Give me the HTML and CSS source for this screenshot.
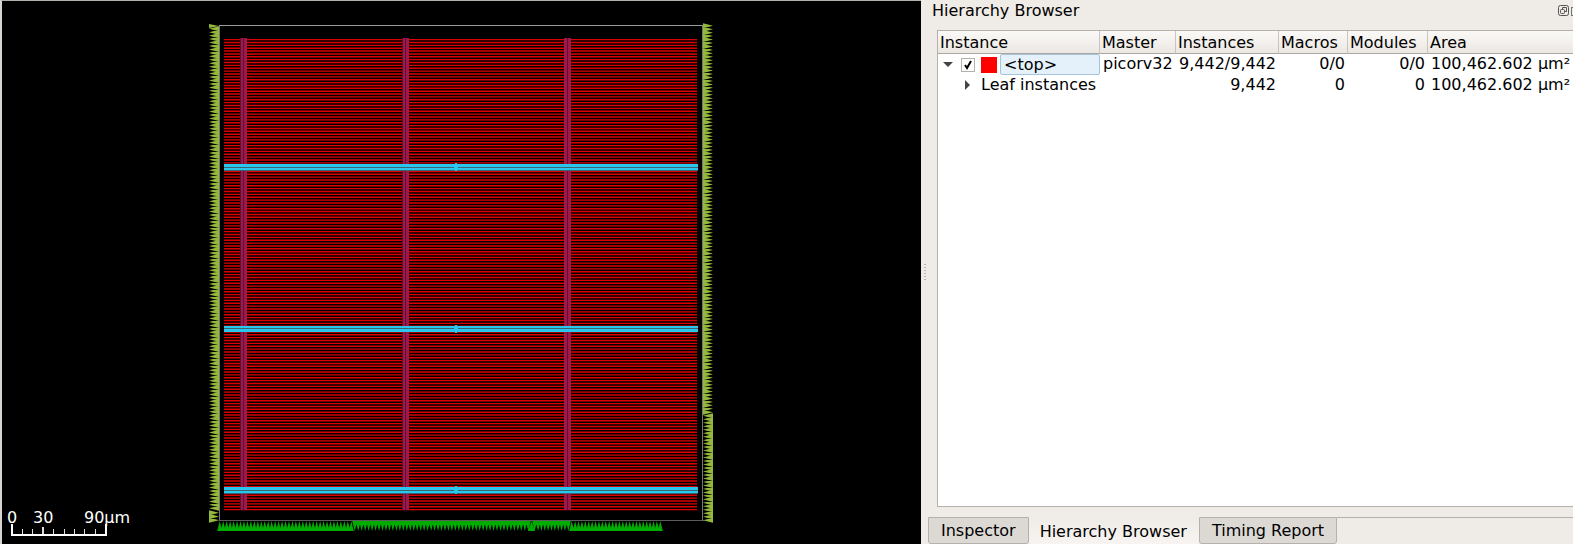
FILE: index.html
```html
<!DOCTYPE html>
<html lang="en">
<head>
<meta charset="utf-8">
<title>Hierarchy Browser</title>
<link rel="stylesheet" href="styles.css">
</head>
<body>
<div class="app">
  <main class="viewer">
    <svg class="layout" viewBox="2 1 919 543" preserveAspectRatio="xMinYMax meet" role="img" aria-label="Chip layout">
      <path id="rows" fill="#dc0000"/>
      <g fill="#a0184a">
        <path d="M241 38h2v472h-2zM244 38h3v472h-3zM403 38h2v472h-2zM406 38h3v472h-3zM564 38h3v472h-3zM568 38h3v472h-3z"/>
        <path fill="#5c1038" d="M240 38h1v472h-1zM243 38h1v472h-1zM402 38h1v472h-1zM405 38h1v472h-1zM567 38h1v472h-1z"/>
      </g>
      <g fill="#28c8ee">
        <path d="M224 164h474v3h-474zM224 168h474v2h-474zM224 326h474v2h-474zM224 329h474v3h-474zM224 487h474v3h-474zM224 491h474v2h-474z"/>
        <path fill="#3c6470" d="M224 167h474v1h-474zM224 170h474v1h-474zM224 328h474v1h-474zM224 490h474v1h-474zM224 493h474v1h-474z"/>
        <path d="M455 163h2v8h-2zM454 165h4v4h-4zM455 325h2v8h-2zM454 327h4v4h-4zM455 486h2v8h-2zM454 488h4v4h-4z"/>
      </g>
      <path fill="#999" d="M219 25h485v1h-485z"/>
      <path fill="#777" d="M219 26h1v495h-1zM702 26h1v495h-1z"/>
      <path fill="#5c5c5c" d="M219 520h485v1h-485z"/>
      <path id="side-pins" fill="#94b83c"/>
      <path id="bottom-pins" fill="#00ac00"/>
      <g fill="#fff">
        <path d="M11 524h2v12h-2zM105 524h2v12h-2zM11 534h96v2h-96z"/>
        <path fill="#ddd" d="M22 529h1v5h-1zM32 529h1v5h-1zM42 527h2v7h-2zM53 529h1v5h-1zM64 529h1v5h-1zM74 529h1v5h-1zM84 529h1v5h-1zM95 529h1v5h-1z"/>
        <text x="7" y="523">0</text>
        <text x="33" y="523">30</text>
        <text x="84" y="523">90µm</text>
      </g>
    </svg>
  </main>
  <div class="splitter" aria-hidden="true"><span class="grip"></span></div>
  <aside class="dock">
    <header class="dock-title">
      <h1>Hierarchy Browser</h1>
      <button class="float" aria-label="Float panel">
        <svg width="12" height="12" viewBox="0 0 12 12" fill="none" stroke="#555"><rect x=".5" y=".5" width="10" height="10" rx="2"/><rect x="2.5" y="4.5" width="4" height="4" rx="1"/><path d="M4.500 4.500v-2h4v4h-2"/></svg>
      </button>
      <button class="close" aria-label="Close panel"></button>
    </header>
    <div class="tree">
      <table>
        <colgroup><col class="c-instance"><col class="c-master"><col class="c-instances"><col class="c-macros"><col class="c-modules"><col></colgroup>
        <thead><tr><th>Instance</th><th>Master</th><th>Instances</th><th>Macros</th><th>Modules</th><th>Area</th></tr></thead>
        <tbody>
          <tr>
            <td class="name"><div class="node">
              <button class="arrow" aria-label="Collapse"><svg width="10" height="6" viewBox="0 0 10 6"><path fill="#444" d="M0 0h10L5 5z"/></svg></button>
              <input type="checkbox" id="top" checked>
              <span class="swatch"></span>
              <label class="current" for="top">&lt;top&gt;</label>
            </div></td>
            <td>picorv32</td><td class="num">9,442/9,442</td><td class="num">0/0</td><td class="num">0/0</td><td>100,462.602 µm²</td>
          </tr>
          <tr>
            <td class="name"><div class="node child">
              <button class="arrow" aria-label="Expand"><svg width="6" height="10" viewBox="0 0 6 10"><path fill="#444" d="M0 0v10l5-5z"/></svg></button>
              <span>Leaf instances</span>
            </div></td>
            <td></td><td class="num">9,442</td><td class="num">0</td><td class="num">0</td><td>100,462.602 µm²</td>
          </tr>
        </tbody>
      </table>
    </div>
    <nav class="tabs">
      <button class="tab">Inspector</button>
      <button class="tab selected">Hierarchy Browser</button>
      <button class="tab">Timing Report</button>
      <span class="rest"></span>
    </nav>
  </aside>
</div>
<script src="layout.js"></script>
</body>
</html>
```
FILE: styles.css
```css
* { box-sizing: border-box; }
body {
  margin: 0;
  background: #efebe7;
  color: #000;
  font: 16px/20px "DejaVu Sans", sans-serif;
}
button { padding: 0; border: 0; background: none; font: inherit; color: inherit; }
.app {
  display: grid;
  grid-template-columns: minmax(0, 921fr) 7px minmax(0, 645fr);
  height: 100vh;
  overflow: hidden;
}
.viewer {
  border-top: 1px solid #b4b0ac;
  border-left: 2px solid #d8d4d0;
  background: #000;
  overflow: hidden;
}
.layout { display: block; width: 100%; height: 100%; }
.splitter { display: flex; align-items: center; justify-content: center; }
.grip {
  width: 2px;
  height: 17px;
  background: repeating-linear-gradient(#bbb7b3 0 1px, transparent 1px 3px);
}
.dock { display: flex; flex-direction: column; min-width: 0; }
.dock-title { display: flex; align-items: center; height: 22px; padding-left: 4px; }
.dock-title h1 { flex: 1; margin: 0; font-size: 16px; font-weight: 400; }
.float, .close { display: flex; }
.close { width: 2px; height: 9px; margin-left: 1px; border: 1px solid #777; border-right: 0; }
.tree {
  flex: 1;
  margin: 8px 0 10px 9px;
  border: 1px solid #b4b0ac;
  border-right: 0;
  background: #fff;
  overflow: hidden;
}
table { width: 100%; table-layout: fixed; border-collapse: separate; border-spacing: 0; }
.c-instance { width: 162px; }
.c-master { width: 76px; }
.c-instances { width: 103px; }
.c-macros { width: 69px; }
.c-modules { width: 80px; }
th {
  height: 23px;
  padding: 2px 2px 0;
  border-right: 1px solid #c8c4c0;
  border-bottom: 1px solid #aaa6a2;
  background: linear-gradient(#fbf9f7, #ebe7e3);
  font-weight: 400;
  text-align: left;
}
th:last-child { border-right: 0; }
td { padding: 0 3px; line-height: 20px; white-space: nowrap; vertical-align: top; }
td.name { padding: 0; }
td.num { text-align: right; }
.node { display: flex; align-items: center; height: 21px; padding-left: 5px; }
.node.child { height: 20px; padding-left: 27px; }
.arrow { display: flex; width: 10px; margin-right: 8px; flex: none; }
input[type="checkbox"] {
  appearance: none;
  width: 14px;
  height: 14px;
  margin: 0 6px 0 0;
  border: 1px solid #b4b0ac;
  background: #fff url("data:image/svg+xml,%3Csvg xmlns='http://www.w3.org/2000/svg' viewBox='0 0 12 12'%3E%3Cpath d='M3 6l2 3 4-7' fill='none' stroke='black' stroke-width='2'/%3E%3C/svg%3E");
}
.swatch { width: 16px; height: 16px; margin-right: 3px; background: #f00; }
.current {
  flex: 1;
  height: 21px;
  padding-left: 3px;
  border: 1px solid #a8c4d8;
  border-radius: 2px;
  background: #e5f1fa;
  line-height: 19px;
}
.child .arrow { width: 8px; }
.tabs { display: flex; height: 27px; }
.tab {
  padding: 0 12px;
  border: 1px solid #b4b0ac;
  border-radius: 0 0 3px 3px;
  background: #dcd8d4;
  line-height: 24px;
  white-space: nowrap;
}
.tab.selected {
  padding: 2px 12px 0 11px;
  border: 0;
  background: linear-gradient(#efebe7, #f7f4f1);
}
.rest { flex: 1; border-top: 1px solid #b4b0ac; }
text { font: 16px "DejaVu Sans", sans-serif; }
```
FILE: layout.js
```js
// Standard-cell power rails
let rails = "";
for (let i = 0; i <= 164; i++) {
  rails += `M224 ${(38.9 + i * 2.866).toFixed(2)}h473v1.4h-473z`;
}
document.getElementById("rows").setAttribute("d", rails);

// Triangular pin markers spread evenly along one edge, overlapping at the base
function pins(from, to, base, tip, vertical) {
  const count = Math.max(1, Math.round((to - from) / 3.45));
  const step = (to - from) / count;
  const point = (along, across) => vertical ? `${across} ${along.toFixed(2)}` : `${along.toFixed(2)} ${across}`;
  let d = "";
  for (let i = 0; i < count; i++) {
    const a = from + i * step;
    d += `M${point(a - 0.8, base)}L${point(a + step / 2, tip)}L${point(a + step + 0.8, base)}z`;
  }
  return d;
}

document.getElementById("side-pins").setAttribute("d",
  "M209 24L219 26L209 28z" +
  pins(27, 510, 219, 209, true) +
  pins(511, 522, 209, 219, true) +
  pins(24, 414, 703, 713, true) +
  pins(414, 522, 713, 703, true));

document.getElementById("bottom-pins").setAttribute("d",
  pins(218, 353, 531, 521, false) +
  pins(353, 530, 521, 531, false) +
  pins(529, 534, 531, 521, false) +
  pins(533, 570, 521, 531, false) +
  pins(570, 662, 531, 521, false));
```
